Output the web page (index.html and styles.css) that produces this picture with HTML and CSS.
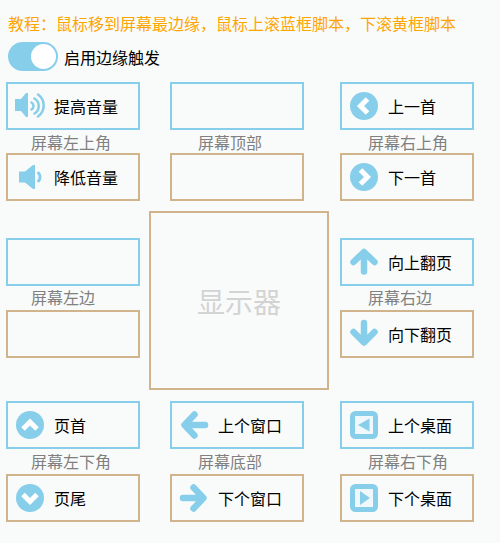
FILE: index.html
```html
<!DOCTYPE html>
<html lang="zh-CN">
<head>
    <meta charset="UTF-8">
    <title>边缘触发</title>
    <link rel="stylesheet" href="styles.css">
</head>
<body>
    <div class="tutorial">教程：鼠标移到屏幕最边缘，鼠标上滚蓝框脚本，下滚黄框脚本</div>

    <div class="switch-row">
        <span class="switch"><span class="knob"></span></span>
        <span>启用边缘触发</span>
    </div>

    <div class="row row-top">
        <div class="group">
            <div class="slot up">
                <svg class="icon" viewBox="0 0 28 28"><path class="fill" d="M-1 7h6l5-6h2v24h-2l-5-6h-6z"/><path class="line" d="M15.500 10.500a4.060 4.060 0 0 1 0 7M18.500 6.500a8.750 8.750 0 0 1 0 15M22 2.500a13.500 13.500 0 0 1 0 22" stroke-width="2.500"/></svg>
                <span>提高音量</span>
            </div>
            <div class="label">屏幕左上角</div>
            <div class="slot down">
                <svg class="icon" viewBox="0 0 28 28"><path class="fill" d="M3 8.500h6l8-6.500h2v24h-2l-8-6.500h-6z"/><path class="line" d="M22.500 10a6 6 0 0 1 0 8" stroke-width="3"/></svg>
                <span>降低音量</span>
            </div>
        </div>
        <div class="group mid">
            <div class="slot up"></div>
            <div class="label">屏幕顶部</div>
            <div class="slot down"></div>
        </div>
        <div class="group">
            <div class="slot up">
                <svg class="icon" viewBox="0 0 28 28"><circle class="fill" cx="14" cy="14" r="14"/><path class="line white" d="M17.500 7 10.500 14l7 7" stroke-width="5"/></svg>
                <span>上一首</span>
            </div>
            <div class="label">屏幕右上角</div>
            <div class="slot down">
                <svg class="icon" viewBox="0 0 28 28"><circle class="fill" cx="14" cy="14" r="14"/><path class="line white" d="M10.500 7 17.500 14l-7 7" stroke-width="5"/></svg>
                <span>下一首</span>
            </div>
        </div>
    </div>

    <div class="row row-middle">
        <div class="group side">
            <div class="slot up"></div>
            <div class="label">屏幕左边</div>
            <div class="slot down"></div>
        </div>
        <div class="monitor">显示器</div>
        <div class="group side">
            <div class="slot up">
                <svg class="icon" viewBox="0 0 28 28"><path class="line" d="M14 23.500V5M3.500 14 14 4l10.500 10" stroke-width="6.500"/></svg>
                <span>向上翻页</span>
            </div>
            <div class="label">屏幕右边</div>
            <div class="slot down">
                <svg class="icon" viewBox="0 0 28 28"><path class="line" d="M14 3v18M3.500 12 14 22.500 24.500 12" stroke-width="6.500"/></svg>
                <span>向下翻页</span>
            </div>
        </div>
    </div>

    <div class="row row-bottom">
        <div class="group">
            <div class="slot up">
                <svg class="icon" viewBox="0 0 28 28"><circle class="fill" cx="14" cy="14" r="14"/><path class="line white" d="M7 18 14 11l7 7" stroke-width="5"/></svg>
                <span>页首</span>
            </div>
            <div class="label">屏幕左下角</div>
            <div class="slot down">
                <svg class="icon" viewBox="0 0 28 28"><circle class="fill" cx="14" cy="14" r="14"/><path class="line white" d="M7 10.500 14 17.500l7-7" stroke-width="5"/></svg>
                <span>页尾</span>
            </div>
        </div>
        <div class="group mid">
            <div class="slot up">
                <svg class="icon" viewBox="0 0 28 28"><path class="line" d="M25 14H6M14.500 3.500 4.500 14l10 10.500" stroke-width="6.500"/></svg>
                <span>上个窗口</span>
            </div>
            <div class="label">屏幕底部</div>
            <div class="slot down">
                <svg class="icon" viewBox="0 0 28 28"><path class="line" d="M3 14h19M13.500 3.500l10 10.500-10 10.500" stroke-width="6.500"/></svg>
                <span>下个窗口</span>
            </div>
        </div>
        <div class="group">
            <div class="slot up">
                <svg class="icon" viewBox="0 0 28 28"><rect class="frame" x="2.500" y="2.500" width="23" height="23" rx="3"/><path class="fill" d="M19.500 7.500v13L8 14z"/></svg>
                <span>上个桌面</span>
            </div>
            <div class="label">屏幕右下角</div>
            <div class="slot down">
                <svg class="icon" viewBox="0 0 28 28"><rect class="frame" x="2.500" y="2.500" width="23" height="23" rx="3"/><path class="fill" d="M10 7v14l10-7z"/></svg>
                <span>下个桌面</span>
            </div>
        </div>
    </div>
</body>
</html>
```

FILE: styles.css
```css
body {
    margin: 0;
    padding: 0;
    background-color: #f9fbfb;
    color: #000;
    font-family: "Noto Sans CJK SC", "Noto Sans", sans-serif;
    font-size: 16px;
}

.tutorial {
    color: orange;
    line-height: 24px;
    padding: 11px 0 0 8px;
}

.switch-row {
    display: flex;
    align-items: center;
    gap: 6px;
    height: 29px;
    margin-top: 7px;
    padding-left: 8px;
}

.switch {
    width: 50px;
    height: 29px;
    box-sizing: border-box;
    padding: 2px;
    background-color: skyblue;
    border-radius: 15px;
    display: flex;
    justify-content: flex-end;
}

.knob {
    width: 25px;
    height: 25px;
    background-color: #fff;
    border-radius: 50%;
}

.row {
    display: flex;
    padding-left: 6px;
}

.row-top {
    margin-top: 11px;
}

.row-middle {
    margin-top: 10px;
}

.row-bottom {
    margin-top: 11px;
}

.group {
    width: 134px;
}

.mid {
    margin: 0 36px 0 30px;
}

.side {
    margin-top: 27px;
}

.slot {
    display: flex;
    align-items: center;
    gap: 10px;
    height: 48px;
    box-sizing: border-box;
    padding-left: 8px;
    border: 2px solid;
}

.up {
    border-color: skyblue;
}

.down {
    border-color: tan;
}

.label {
    height: 24px;
    line-height: 24px;
    padding-left: 25px;
    color: gray;
}

.row-top .label {
    height: 23px;
}

.row-middle .label {
    line-height: 22px;
}

.row-bottom .label {
    height: 25px;
    line-height: 25px;
}

.mid .label,
.group:last-child .label {
    padding-left: 28px;
}

.icon {
    width: 28px;
    height: 28px;
    flex-shrink: 0;
    overflow: visible;
}

.fill {
    fill: skyblue;
}

.line {
    fill: none;
    stroke: skyblue;
    stroke-linecap: round;
    stroke-linejoin: round;
}

.white {
    stroke: #fff;
    stroke-linecap: butt;
    stroke-linejoin: miter;
}

.frame {
    fill: #f0f8fb;
    stroke: skyblue;
    stroke-width: 5;
}

.monitor {
    width: 180px;
    height: 179px;
    box-sizing: border-box;
    margin: 0 11px 0 9px;
    border: 2px solid tan;
    display: flex;
    align-items: center;
    justify-content: center;
    color: #d3d3d3;
    font-size: 28px;
}
```
